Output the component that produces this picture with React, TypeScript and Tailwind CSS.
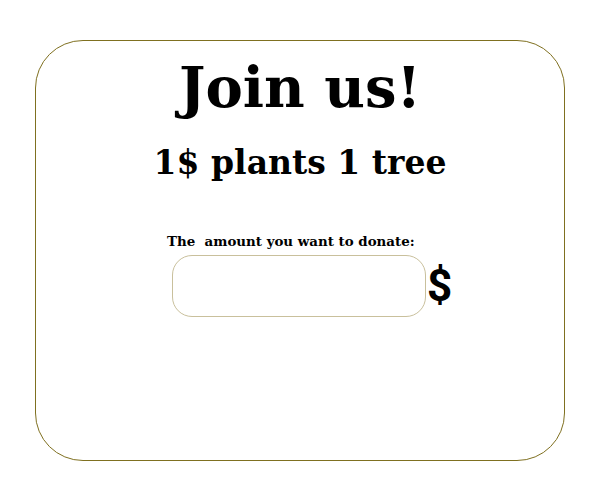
export default function App() {
    return (
        <div className="w-full min-h-[500px] bg-white pt-[40px]">
            <div className="mx-auto w-[530px] h-[421px] border-[1.5px] border-[#7f7020] rounded-[48px] flex flex-col">
                <h1
                    className="text-center text-black font-bold text-[56px] leading-none mt-[18px]"
                    style={{ fontFamily: '"DejaVu Serif", serif' }}
                >
                    Join us!
                </h1>
                <h2
                    className="text-center text-black font-bold text-[33px] leading-none mt-[31px]"
                    style={{ fontFamily: '"DejaVu Serif", serif' }}
                >
                    1$ plants 1 tree
                </h2>

                <div className="ml-[131px] mt-[56px] flex flex-col">
                    <label
                        className="text-black font-bold text-[13.4px] leading-none whitespace-pre"
                        style={{ fontFamily: '"DejaVu Serif", serif' }}
                    >
                        The  amount you want to donate:
                    </label>
                    <div className="flex items-center mt-[7px]">
                        <input
                            type="text"
                            className="ml-[5px] w-[254px] h-[62px] rounded-[20px] border border-[#c9c09c] outline-none px-4"
                        />
                        <span className="text-black font-bold text-[44px] leading-none ml-[1px]" style={{ fontFamily: 'Roboto, sans-serif' }}>$</span>
                    </div>
                </div>
            </div>
        </div>
    )
}
